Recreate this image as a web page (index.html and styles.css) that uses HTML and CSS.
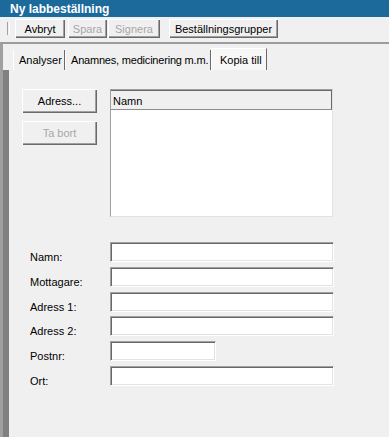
FILE: index.html
```html
<!DOCTYPE html>
<html lang="sv">

<head>
    <meta charset="UTF-8">
    <meta name="viewport" content="width=device-width, initial-scale=1.0">
    <title>Ny labbeställning</title>
    <link rel="stylesheet" href="styles.css">
</head>

<body>
    <div class="titlebar">Ny labbeställning</div>

    <div class="toolbar">
        <span class="grip"></span>
        <button class="btn tb-avbryt">Avbryt</button>
        <button class="btn tb-spara" disabled>Spara</button>
        <button class="btn tb-signera" disabled>Signera</button>
        <button class="btn tb-grupper">Beställningsgrupper</button>
    </div>

    <div class="main">
        <div class="tabs">
            <div class="tab tab-analyser">Analyser</div>
            <div class="tab tab-anamnes">Anamnes, medicinering m.m.</div>
            <div class="tab tab-kopia active">Kopia till</div>
        </div>

        <div class="panel">
            <div class="top-row">
                <div class="actions">
                    <button class="btn big">Adress...</button>
                    <button class="btn big" disabled>Ta bort</button>
                </div>
                <div class="list">
                    <div class="list-head">Namn</div>
                </div>
            </div>

            <div class="form">
                <label>Namn:</label>
                <input class="field" type="text">
                <label>Mottagare:</label>
                <input class="field" type="text">
                <label>Adress 1:</label>
                <input class="field" type="text">
                <label>Adress 2:</label>
                <input class="field" type="text">
                <label>Postnr:</label>
                <input class="field short" type="text">
                <label>Ort:</label>
                <input class="field" type="text">
            </div>
        </div>
    </div>
</body>

</html>
```

FILE: styles.css
```css
body {
    margin: 0;
    height: 437px;
    overflow: hidden;
    background-color: #f0f0f0;
    color: black;
    font-family: "Liberation Sans", Arial, sans-serif;
    font-size: 11px;
}

.titlebar {
    height: 17px;
    line-height: 18px;
    padding-left: 10px;
    background-color: #1b6a9b;
    color: white;
    font-weight: bold;
    font-size: 12px;
}

.toolbar {
    height: 25px;
    display: flex;
    align-items: flex-start;
    padding-top: 2px;
    padding-left: 7px;
    box-sizing: border-box;
}

.grip {
    width: 1px;
    height: 13px;
    margin-top: 3px;
    margin-right: 5px;
    border-left: 1px solid #a0a0a0;
    border-right: 1px solid white;
}

.btn {
    height: 19px;
    padding: 0;
    border: none;
    background-color: #f0f0f0;
    color: black;
    font-family: inherit;
    font-size: 11px;
    text-align: center;
    box-shadow: inset 1px 1px white, inset -1px -1px #696969, inset -2px -2px #a0a0a0;
}

.btn:disabled {
    color: #a7a7a7;
}

.tb-avbryt {
    width: 50px;
}

.tb-spara {
    width: 39px;
    margin-left: 3px;
}

.tb-signera {
    width: 52px;
    margin-left: 1px;
}

.tb-grupper {
    width: 109px;
    margin-left: 9px;
}

.main {
    border-top: 2px solid #9c9c9c;
    border-left: 3px solid #a0a0a0;
    height: 393px;
}

.tabs {
    height: 26px;
    display: flex;
    align-items: flex-end;
    padding-left: 10px;
}

.tab {
    height: 20px;
    line-height: 20px;
    box-sizing: border-box;
    border-left: 1px solid white;
    border-right: 1px solid #696969;
    white-space: nowrap;
    overflow: hidden;
}

.tab-analyser {
    width: 52px;
    padding-left: 5px;
}

.tab-anamnes {
    width: 146px;
    padding-left: 5px;
    letter-spacing: -0.2px;
}

.tab-kopia {
    width: 56px;
    padding-left: 8px;
}

.tab.active {
    height: 22px;
    line-height: 22px;
    border-top: 1px solid white;
    background-color: #f7f7f7;
}

.panel {
    height: 367px;
    box-sizing: border-box;
    border-left: 6px solid #a0a0a0;
    border-image: linear-gradient(to right, #808080 0 1px, #a0a0a0 1px 5px, #868686 5px 6px) 1;
    border-top: none;
    border-right: none;
    border-bottom: none;
    padding: 19px 0 0 13px;
}

.top-row {
    display: flex;
    gap: 13px;
}

.actions {
    display: flex;
    flex-direction: column;
    gap: 8px;
}

.btn.big {
    width: 75px;
    height: 24px;
}

.list {
    width: 223px;
    height: 128px;
    box-sizing: border-box;
    background-color: white;
    border-top: 1px solid #a0a0a0;
    border-left: 1px solid #a0a0a0;
    border-right: 1px solid #e3e3e3;
    border-bottom: 1px solid #e3e3e3;
}

.list-head {
    height: 20px;
    line-height: 20px;
    padding-left: 2px;
    box-sizing: border-box;
    background-color: #f0f0f0;
    border-top: 1px solid #696969;
    border-bottom: 1px solid #8c8c8c;
    border-right: 1px solid #696969;
}

.form {
    display: grid;
    grid-template-columns: 80px auto;
    justify-items: start;
    row-gap: 4.8px;
    margin-top: 25px;
    padding-left: 8px;
}

.form label {
    height: 20px;
    box-sizing: border-box;
    padding-top: 9px;
    line-height: 12px;
}

.field {
    width: 224px;
    height: 20px;
    box-sizing: border-box;
    margin: 0;
    padding: 0;
    background-color: white;
    border-top: 1px solid #a0a0a0;
    border-left: 1px solid #a0a0a0;
    border-right: 1px solid white;
    border-bottom: 1px solid white;
    box-shadow: inset 1px 1px #696969, inset -1px -1px #e3e3e3;
    outline: none;
}

.field.short {
    width: 106px;
}
```
